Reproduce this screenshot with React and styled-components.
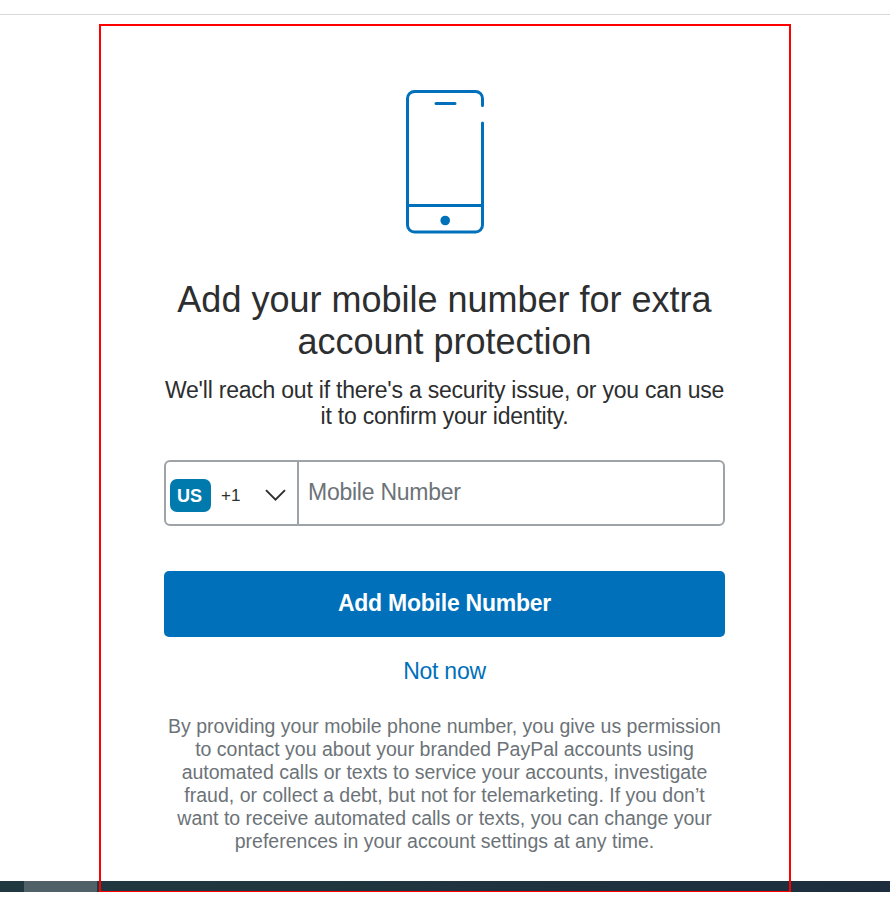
import React from "react";
import styled, { createGlobalStyle } from "styled-components";

const GlobalStyle = createGlobalStyle`
  * { box-sizing: border-box; }
  body {
    margin: 0;
    background: #fff;
    font-family: "Liberation Sans", Arial, sans-serif;
    color: #2c2e2f;
  }
`;

const Page = styled.div`
  display: flex;
  flex-direction: column;
  width: 890px;
  height: 917px;
  overflow: hidden;
  background: #fff;
`;

const TopBar = styled.header`
  height: 15px;
  flex: none;
  border-bottom: 1px solid #d9d9d9;
`;

const Backdrop = styled.div`
  height: 877px;
  padding: 9px 99px 0;
  background:
    linear-gradient(90deg, transparent 24px, #506268 24px, #506268 97px, transparent 97px) 0 866px / 100% 11px no-repeat,
    linear-gradient(90deg, #203840, #20363f 40%, #1d2d3e) 0 866px / 100% 11px no-repeat;
`;

const Card = styled.main`
  display: flex;
  flex-direction: column;
  align-items: center;
  width: 692px;
  height: 868px;
  padding: 64px 64px 0 63px;
  border: 2px solid #fe0000;
  border-bottom-width: 1px;
`;

const PhoneIcon = styled.svg`
  display: block;
  flex: none;
  width: 80px;
  height: 146px;
`;

const Title = styled.h1`
  margin: 43px 0 0;
  font-size: 36px;
  line-height: 42px;
  font-weight: 400;
  text-align: center;
  white-space: nowrap;
`;

const Subtitle = styled.p`
  margin: 14px 0 0;
  font-size: 23px;
  line-height: 26px;
  letter-spacing: -0.22px;
  text-align: center;
  white-space: nowrap;
`;

const Field = styled.div`
  display: flex;
  flex: none;
  width: 561px;
  height: 66px;
  margin-top: 31px;
  border: 2px solid #9da3a6;
  border-radius: 6px;
  background: #fff;
`;

const CountryButton = styled.button`
  display: flex;
  align-items: center;
  width: 133px;
  padding: 5px 0 0 4px;
  border: 0;
  border-right: 2px solid #9da3a6;
  background: transparent;
  color: #2c2e2f;
  font-family: inherit;
`;

const CountryBadge = styled.span`
  width: 41px;
  height: 33px;
  padding-right: 2px;
  border-radius: 7px;
  background: #0079ad;
  color: #fff;
  font-size: 18px;
  font-weight: 700;
  line-height: 34px;
  text-align: center;
`;

const DialCode = styled.span`
  width: 54px;
  padding-left: 10px;
  font-size: 17px;
  line-height: 34px;
  text-align: left;
`;

const Chevron = styled.svg`
  width: 22px;
  height: 14px;
`;

const NumberInput = styled.input`
  flex: 1;
  min-width: 0;
  padding: 0 9px 2px;
  border: 0;
  outline: 0;
  background: transparent;
  font: 23px "Liberation Sans", Arial, sans-serif;
  letter-spacing: -0.25px;
  &::placeholder { color: #6c7378; opacity: 1; }
`;

const SubmitButton = styled.button`
  flex: none;
  width: 561px;
  height: 66px;
  margin-top: 45px;
  padding: 0 0 2px;
  border: 0;
  border-radius: 5px;
  background: #0070ba;
  color: #fff;
  font: 700 23px "Liberation Sans", Arial, sans-serif;
  letter-spacing: -0.24px;
`;

const SkipLink = styled.a`
  margin-top: 21px;
  color: #0070ba;
  font-size: 23px;
  line-height: 26px;
  letter-spacing: -0.24px;
`;

const Legal = styled.p`
  margin: 31px 0 0;
  color: #6c7378;
  font-size: 19.5px;
  line-height: 23px;
  text-align: center;
  white-space: nowrap;
`;

const Line = styled.span`
  display: block;
`;

const LEGAL_LINES = [
  "By providing your mobile phone number, you give us permission",
  "to contact you about your branded PayPal accounts using",
  "automated calls or texts to service your accounts, investigate",
  "fraud, or collect a debt, but not for telemarketing. If you don’t",
  "want to receive automated calls or texts, you can change your",
  "preferences in your account settings at any time.",
];

export default function App() {
  return (
    <Page>
      <GlobalStyle />
      <TopBar />
      <Backdrop>
        <Card>
          <PhoneIcon viewBox="0 0 80 146" fill="none" stroke="#0070ba" strokeWidth="3" strokeLinecap="round">
            <path d="M77.5 15.5V8.5a7 7 0 0 0-7-7h-61a7 7 0 0 0-7 7v126.5a7 7 0 0 0 7 7h61a7 7 0 0 0 7-7V33" />
            <path d="M2.5 115.5h75M31 13.5h19" />
            <circle cx="40.2" cy="130.5" r="4.8" fill="#0070ba" stroke="none" />
          </PhoneIcon>
          <Title>
            <Line>Add your mobile number for extra</Line>
            <Line>account protection</Line>
          </Title>
          <Subtitle>
            <Line>We'll reach out if there's a security issue, or you can use</Line>
            <Line>it to confirm your identity.</Line>
          </Subtitle>
          <Field>
            <CountryButton type="button">
              <CountryBadge>US</CountryBadge>
              <DialCode>+1</DialCode>
              <Chevron viewBox="0 0 22 14" fill="none" stroke="#2c2e2f" strokeWidth="1.9">
                <path d="M1 1.2 10.5 10.7 20 1.2" />
              </Chevron>
            </CountryButton>
            <NumberInput type="tel" placeholder="Mobile Number" />
          </Field>
          <SubmitButton type="button">Add Mobile Number</SubmitButton>
          <SkipLink>Not now</SkipLink>
          <Legal>
            {LEGAL_LINES.map((line) => (
              <Line key={line}>{line}</Line>
            ))}
          </Legal>
        </Card>
      </Backdrop>
    </Page>
  );
}
